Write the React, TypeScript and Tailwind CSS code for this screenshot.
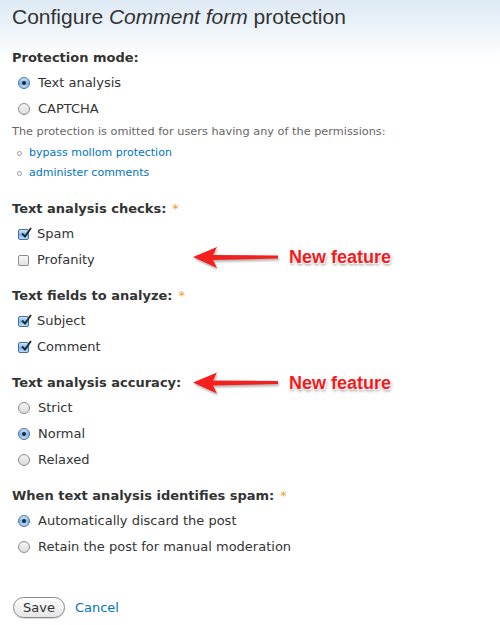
import React from "react";

function Radio({ checked }: { checked?: boolean }) {
  return (
    <span
      className={`relative inline-flex h-[12px] w-[12px] shrink-0 items-center justify-center rounded-full border ${
        checked
          ? "border-[#4a6f95] bg-gradient-to-b from-[#cfe6fb] via-[#7fb6ea] to-[#b9dcfb]"
          : "border-[#8c8c8c] bg-gradient-to-b from-[#f4f4f4] to-[#dcdcdc]"
      }`}
    >
      {checked && <span className="h-[4px] w-[4px] rounded-full bg-[#1f2a38]" />}
    </span>
  );
}

function Checkbox({ checked }: { checked?: boolean }) {
  return (
    <span
      className={`relative inline-flex h-[11px] w-[11px] shrink-0 items-center justify-center rounded-[2px] border ${
        checked
          ? "border-[#4a6f95] bg-gradient-to-b from-[#cfe6fb] via-[#7fb6ea] to-[#b9dcfb]"
          : "border-[#8c8c8c] bg-gradient-to-b from-[#fafafa] to-[#e2e2e2]"
      }`}
    >
      {checked && (
        <svg viewBox="0 0 12 12" className="absolute -top-[3px] left-[1px] h-[12px] w-[12px]">
          <path d="M2 6.5 L5 9.5 L11 1" fill="none" stroke="#1b2634" strokeWidth="1.8" />
        </svg>
      )}
    </span>
  );
}

function Option({ kind, checked, children }: { kind: "radio" | "check"; checked?: boolean; children: React.ReactNode }) {
  return (
    <div className="flex h-[26px] items-center gap-[8px] pl-[6px]">
      {kind === "radio" ? <Radio checked={checked} /> : <Checkbox checked={checked} />}
      <span className="text-[13px] text-[#333]">{children}</span>
    </div>
  );
}

function Label({ children, required }: { children: React.ReactNode; required?: boolean }) {
  return (
    <div className="flex h-[24px] items-center text-[13px] font-bold text-[#333]">
      {children}
      {required && <span className="ml-[6px] font-normal text-[#f0a030]">*</span>}
    </div>
  );
}

function NewFeature({ shift }: { shift?: boolean }) {
  return (
    <div
      className={`absolute left-[181px] top-1/2 flex items-center gap-[10px] ${
        shift ? "-translate-y-[16px]" : "-translate-y-1/2"
      }`}
    >
      <svg width="86" height="24" viewBox="0 0 86 24" className="drop-shadow-[1px_2px_1px_rgba(0,0,0,0.3)]">
        <path d="M0 11 L24 1 L20 9 L85 9.5 L85 12.5 L20 14 L24 22 Z" fill="#f3201e" />
      </svg>
      <span
        className="font-['Liberation_Sans',Arial,sans-serif] text-[18px] font-bold text-[#f5191b]"
        style={{ textShadow: "0 0 2px #fff, 1px 1px 0 #fff, -1px -1px 0 #fff, 1px 2px 3px rgba(0,0,0,0.45)" }}
      >
        New feature
      </span>
    </div>
  );
}

export default function App() {
  return (
    <div className="min-h-[625px] w-[500px] bg-gradient-to-b from-[#dde9f4] to-white to-[60px] font-['DejaVu_Sans',Verdana,sans-serif] text-[#333]">
      <div className="px-[12px]">
        <h1 className="pt-[3px] font-['Liberation_Sans',Arial,sans-serif] text-[21px] font-normal leading-[28px] text-[#333]">
          Configure <em>Comment form</em> protection
        </h1>

        <div className="mt-[15px]">
          <Label>Protection mode:</Label>
          <Option kind="radio" checked>Text analysis</Option>
          <Option kind="radio">CAPTCHA</Option>
          <p className="mt-[1px] h-[18px] text-[11.3px] leading-[18px] text-[#666]">
            The protection is omitted for users having any of the permissions:
          </p>
          <ul className="mt-[2px]">
            {["bypass mollom protection", "administer comments"].map((p) => (
              <li key={p} className="flex h-[20px] items-center gap-[7px] pl-[5px] text-[11px]">
                <span className="h-[5px] w-[5px] rounded-full border border-[#999]" />
                <a className="text-[#0074bd]">{p}</a>
              </li>
            ))}
          </ul>
        </div>

        <div className="mt-[14px]">
          <Label required>Text analysis checks:</Label>
          <Option kind="check" checked>Spam</Option>
          <div className="relative">
            <Option kind="check">Profanity</Option>
            <NewFeature shift />
          </div>
        </div>

        <div className="mt-[11px]">
          <Label required>Text fields to analyze:</Label>
          <Option kind="check" checked>Subject</Option>
          <Option kind="check" checked>Comment</Option>
        </div>

        <div className="mt-[11px]">
          <div className="relative">
            <Label>Text analysis accuracy:</Label>
            <NewFeature />
          </div>
          <Option kind="radio">Strict</Option>
          <Option kind="radio" checked>Normal</Option>
          <Option kind="radio">Relaxed</Option>
        </div>

        <div className="mt-[11px]">
          <Label required>When text analysis identifies spam:</Label>
          <Option kind="radio" checked>Automatically discard the post</Option>
          <Option kind="radio">Retain the post for manual moderation</Option>
        </div>

        <div className="mt-[37px] flex items-center gap-[10px] pl-[1px]">
          <button className="h-[21px] rounded-full border border-[#8a8a8a] bg-gradient-to-b from-white to-[#e4e4e4] px-[9px] text-[13px] leading-[19px] text-[#333] shadow-[0_1px_1px_rgba(0,0,0,0.15)]">
            Save
          </button>
          <a className="text-[13px] text-[#0074bd]">Cancel</a>
        </div>
      </div>
    </div>
  );
}
